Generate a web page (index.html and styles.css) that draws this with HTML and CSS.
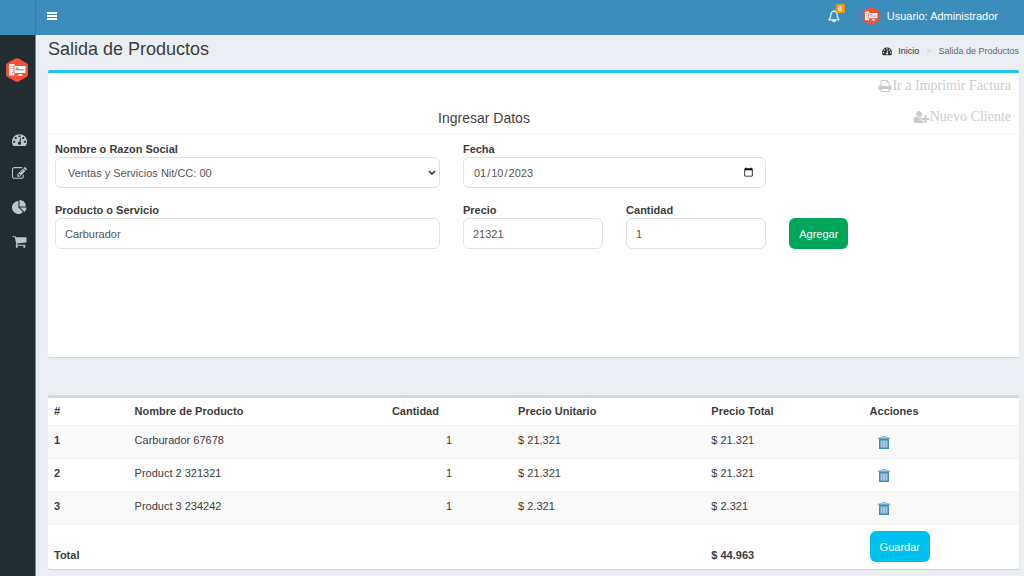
FILE: index.html
```html
<!DOCTYPE html>
<html lang="es">
<head>
<meta charset="utf-8">
<title>Salida de Productos</title>
<link rel="stylesheet" href="styles.css">
</head>
<body>
<svg class="sprite" aria-hidden="true">
  <symbol id="dashboard" viewBox="0 0 1792 1792"><path d="M384 1152q0-53-37.500-90.500t-90.500-37.500-90.500 37.500-37.500 90.500 37.500 90.500 90.500 37.500 90.500-37.500 37.500-90.500zm192-448q0-53-37.500-90.500t-90.500-37.500-90.500 37.500-37.500 90.500 37.500 90.500 90.500 37.500 90.500-37.500 37.500-90.500zm428 481l101-382q6-26-7.500-48.500t-38.500-29.500-48 6.500-30 39.500l-101 382q-60 5-107 43.500t-63 98.500q-20 77 20 146t117 89 146-20 89-117q16-60-6-117t-72-91zm660-33q0-53-37.500-90.500t-90.500-37.500-90.500 37.500-37.500 90.500 37.500 90.500 90.500 37.500 90.500-37.500 37.500-90.500zm-640-640q0-53-37.500-90.500t-90.500-37.500-90.500 37.500-37.500 90.500 37.500 90.500 90.500 37.500 90.500-37.500 37.500-90.500zm448 192q0-53-37.500-90.500t-90.500-37.500-90.500 37.500-37.500 90.500 37.500 90.500 90.500 37.500 90.500-37.500 37.500-90.500zm320 448q0 261-141 483-19 29-54 29h-1402q-35 0-54-29-141-221-141-483 0-182 71-348t191-286 286-191 348-71 348 71 286 191 191 286 71 348z"/></symbol>
  <symbol id="edit" viewBox="0 0 1792 1792"><path d="M888 1184l116-116-152-152-116 116v56h96v96h56zm440-720q-16-16-33 1l-350 350q-17 17-1 33t33-1l350-350q17-17 1-33zm80 594v190q0 119-84.500 203.500t-203.500 84.500h-832q-119 0-203.500-84.500t-84.500-203.500v-832q0-119 84.500-203.500t203.500-84.500h832q63 0 117 25 15 7 18 23 3 17-9 29l-49 49q-14 14-32 8-23-6-45-6h-832q-66 0-113 47t-47 113v832q0 66 47 113t113 47h832q66 0 113-47t47-113v-126q0-13 9-22l64-64q15-15 35-7t20 29zm-96-738l288 288-672 672h-288v-288zm444 132l-92 92-288-288 92-92q28-28 68-28t68 28l152 152q28 28 28 68t-28 68z"/></symbol>
  <symbol id="pie" viewBox="0 0 1792 1792"><path d="M768 890l546 546q-106 108-247.500 168t-298.500 60q-209 0-385.500-103t-279.500-279.500-103-385.500 103-385.500 279.500-279.500 385.500-103v762zm187 6h773q0 157-60 298.500t-168 247.500zm709-128h-768v-768q209 0 385.500 103t279.500 279.500 103 385.500z"/></symbol>
  <symbol id="cart" viewBox="0 0 1792 1792"><path d="M704 1536q0 52-38 90t-90 38-90-38-38-90 38-90 90-38 90 38 38 90zm896 0q0 52-38 90t-90 38-90-38-38-90 38-90 90-38 90 38 38 90zm128-1088v512q0 24-16.500 42.500t-40.500 21.500l-1044 122q13 60 13 70 0 16-24 64h920q26 0 45 19t19 45-19 45-45 19h-1024q-26 0-45-19t-19-45q0-11 8-31.500t16-36 21.500-40 15.500-29.500l-177-823h-204q-26 0-45-19t-19-45 19-45 45-19h256q16 0 28.500 6.500t19.500 15.500 13 24.500 8 26 5.500 29.500 4.500 26h1201q26 0 45 19t19 45z"/></symbol>
  <symbol id="print" viewBox="0 0 1792 1792"><path d="M448 1536h896v-256h-896v256zm0-640h896v-384h-160q-40 0-68-28t-28-68v-160h-640v640zm1152 64q0-26-19-45t-45-19-45 19-19 45 19 45 45 19 45-19 19-45zm128 0v416q0 13-9.500 22.500t-22.500 9.500h-224v160q0 40-28 68t-68 28h-960q-40 0-68-28t-28-68v-160h-224q-13 0-22.500-9.500t-9.500-22.500v-416q0-79 56.500-135.500t135.500-56.500h64v-544q0-40 28-68t68-28h672q40 0 88 20t76 48l152 152q28 28 48 76t20 88v256h64q79 0 135.500 56.500t56.500 135.500z"/></symbol>
  <symbol id="user-plus" viewBox="0 0 2048 1792"><path d="M704 896q-159 0-271.500-112.500t-112.500-271.500 112.500-271.500 271.500-112.500 271.500 112.500 112.500 271.500-112.500 271.500-271.500 112.500zm960 128h352q13 0 22.500 9.500t9.500 22.500v192q0 13-9.500 22.500t-22.500 9.500h-352v352q0 13-9.500 22.500t-22.500 9.500h-192q-13 0-22.500-9.500t-9.500-22.500v-352h-352q-13 0-22.500-9.500t-9.500-22.500v-192q0-13 9.500-22.500t22.500-9.500h352v-352q0-13 9.500-22.500t22.500-9.500h192q13 0 22.500 9.500t9.500 22.500v352zm-736 224q0 52 38 90t90 38h256v238q-68 50-171 50h-874q-121 0-194-69t-73-190q0-53 3.500-103.500t14-109 26.500-108.500 43-97.500 62-81 85.500-53.500 111.500-20q19 0 39 17 79 61 154.500 91.500t164.500 30.500 164.500-30.500 154.500-91.500q20-17 39-17 132 0 217 96h-223q-52 0-90 38t-38 90v192z"/></symbol>
  <symbol id="bell" viewBox="0 0 1792 1792"><path stroke="currentColor" stroke-width="50" d="M912 1696q0-16-16-16-59 0-101.500-42.500t-42.500-101.500q0-16-16-16t-16 16q0 73 51.500 124.500t124.500 51.500q16 0 16-16zm-666-288h1300q-266-300-266-832 0-51-24-105t-69-103-121.500-80.500-169.500-31.500-169.500 31.500-121.500 80.500-69 103-24 105q0 532-266 832zm1482 0q0 52-38 90t-90 38h-448q0 106-75 181t-181 75-181-75-75-181h-448q-52 0-90-38t-38-90q50-42 91-88t85-119.500 74.500-158.500 50-206 19.500-260q0-152 117-282.500t307-158.500q-8-19-8-39 0-40 28-68t68-28 68 28 28 68q0 20-8 39 190 28 307 158.500t117 282.500q0 139 19.500 260t50 206 74.500 158.500 85 119.500 91 88z"/></symbol>
  <symbol id="bars" viewBox="0 0 10 9"><path d="M0 0h10v2H0zM0 3h10v2H0zM0 6h10v2H0z"/></symbol>
  <symbol id="trash" viewBox="0 0 12 13"><path fill="#b3c3dc" d="M2 4h8v8H2z"/><path fill="none" stroke="#7fb0d6" d="M3.500 2V1.500L4.500.500h3l1 1V2"/><path opacity=".75" d="M0 1.500h12v1.500H0z"/><path d="M1 3h10v10H1zM2.500 4.500v7h7v-7z" fill-rule="evenodd"/><path opacity=".4" d="M4 4.500h1v6.500H4zM7 4.500h1v6.500H7z"/></symbol>
  <symbol id="brand" viewBox="0 0 22 24"><path fill="#fb4d34" d="M9.500.600a3 3 0 0 1 3 0l8 4.400a3 3 0 0 1 1.500 2.600v8.800a3 3 0 0 1-1.500 2.600l-8 4.400a3 3 0 0 1-3 0l-8-4.400A3 3 0 0 1 0 16.400V7.600A3 3 0 0 1 1.500 5z"/><path fill="#fff" d="M3 6h5.500v1.500H7.500V15H8.500v2.500H3zM8.500 8h11v7h-11zM13 16h2.500l1.500 2h-5.500z"/><path fill="#fb4d34" d="M4 8.500h2.500v.5H4zM4 10.500h2.500v.5H4zM6 14h1v1H6z"/><path fill="#6b3a35" d="M9.700 9.700h3v.7h-3zM9.700 11.500h8v.7h-8z"/></symbol>
</svg>

<header class="topbar">
  <div class="topbar-logo"></div>
  <nav class="topbar-nav">
    <button class="icon-button" type="button" aria-label="Menú"><svg class="icon-bars"><use href="#bars"/></svg></button>
    <div class="topbar-right">
      <button class="icon-button alerts" type="button" aria-label="Notificaciones"><svg class="icon-bell"><use href="#bell"/></svg><span class="badge">0</span></button>
      <a class="user" href="#"><svg class="user-logo"><use href="#brand"/></svg><span>Usuario: Administrador</span></a>
    </div>
  </nav>
</header>

<div class="wrapper">
  <aside class="sidebar">
    <svg class="brand"><use href="#brand"/></svg>
    <nav class="menu">
      <a href="#" aria-label="Inicio"><svg><use href="#dashboard"/></svg></a>
      <a href="#" aria-label="Registros"><svg><use href="#edit"/></svg></a>
      <a href="#" aria-label="Reportes"><svg><use href="#pie"/></svg></a>
      <a href="#" aria-label="Ventas"><svg><use href="#cart"/></svg></a>
    </nav>
  </aside>

  <main class="content">
    <div class="page-head">
      <h1>Salida de Productos</h1>
      <nav class="breadcrumb"><a href="#"><svg><use href="#dashboard"/></svg>Inicio</a><span class="sep">&gt;</span><span>Salida de Productos</span></nav>
    </div>

    <section class="box box-form">
      <div class="box-head">
        <a href="#"><svg class="icon-print"><use href="#print"/></svg>Ir a Imprimir Factura</a>
        <a href="#"><svg class="icon-user"><use href="#user-plus"/></svg>Nuevo Cliente</a>
        <h2>Ingresar Datos</h2>
      </div>
      <form class="form">
        <div class="field span-5">
          <label for="cliente">Nombre o Razon Social</label>
          <select id="cliente"><option>Ventas y Servicios Nit/CC: 00</option></select>
        </div>
        <div class="field span-4">
          <label for="fecha">Fecha</label>
          <input id="fecha" type="date" value="2023-01-10">
        </div>
        <div class="field span-5 row-start">
          <label for="producto">Producto o Servicio</label>
          <input id="producto" type="text" value="Carburador">
        </div>
        <div class="field span-2">
          <label for="precio">Precio</label>
          <input id="precio" type="text" value="21321">
        </div>
        <div class="field span-2">
          <label for="cantidad">Cantidad</label>
          <input id="cantidad" type="text" value="1">
        </div>
        <button class="btn btn-green" type="button">Agregar</button>
      </form>
    </section>

    <section class="box box-table">
      <table>
        <colgroup><col class="c-num"><col class="c-name"><col class="c-qty"><col class="c-unit"><col class="c-total"><col class="c-act"></colgroup>
        <thead>
          <tr><th>#</th><th>Nombre de Producto</th><th>Cantidad</th><th>Precio Unitario</th><th>Precio Total</th><th>Acciones</th></tr>
        </thead>
        <tbody>
          <tr><th>1</th><td>Carburador 67678</td><td class="qty">1</td><td>$ 21.321</td><td>$ 21.321</td><td><button class="icon-button delete" type="button" aria-label="Eliminar"><svg><use href="#trash"/></svg></button></td></tr>
          <tr><th>2</th><td>Product 2 321321</td><td class="qty">1</td><td>$ 21.321</td><td>$ 21.321</td><td><button class="icon-button delete" type="button" aria-label="Eliminar"><svg><use href="#trash"/></svg></button></td></tr>
          <tr><th>3</th><td>Product 3 234242</td><td class="qty">1</td><td>$ 2.321</td><td>$ 2.321</td><td><button class="icon-button delete" type="button" aria-label="Eliminar"><svg><use href="#trash"/></svg></button></td></tr>
        </tbody>
        <tfoot>
          <tr><th colspan="4">Total</th><th>$ 44.963</th><td><button class="btn btn-cyan" type="button">Guardar</button></td></tr>
        </tfoot>
      </table>
    </section>
  </main>
</div>
</body>
</html>
```
FILE: styles.css
```css
* { box-sizing: border-box; }
body {
  margin: 0;
  min-height: 100vh;
  display: flex;
  flex-direction: column;
  background: #ebeff4;
  color: #3c3c3c;
  font: 11px/16px "Liberation Sans", Arial, sans-serif;
}
a { color: inherit; text-decoration: none; }
svg { display: block; fill: currentColor; }
h1, h2 { margin: 0; font-weight: 400; }
.sprite { display: none; }
.icon-button { padding: 0; border: 0; background: none; color: inherit; cursor: pointer; }

.topbar { display: flex; height: 35px; background: #3c8dbc; color: #fff; }
.topbar-logo { width: 36px; border-right: 1px solid #367fa9; }
.topbar-nav { flex: 1; display: flex; align-items: center; justify-content: space-between; padding: 0 26px 3px 11px; }
.icon-bars { width: 10px; height: 9px; }
.topbar-right { display: flex; align-items: center; gap: 22px; }
.alerts { position: relative; }
.icon-bell { width: 12px; height: 12px; }
.badge {
  position: absolute;
  left: 8px;
  top: -6px;
  width: 9px;
  height: 9px;
  border-radius: 2px;
  background: #f39c12;
  font: 700 7px/9px "Liberation Sans", Arial, sans-serif;
  text-align: center;
}
.user { display: flex; align-items: center; gap: 7px; }
.user-logo { width: 18px; height: 18px; }

.wrapper { flex: 1; display: flex; }
.sidebar { width: 36px; padding-top: 23px; background: #222d32; border-right: 1px solid #7b8488; }
.brand { width: 22px; height: 24px; margin-left: 6px; }
.menu { padding-top: 40px; color: #b8c7ce; }
.menu a { display: flex; align-items: center; height: 34px; padding-left: 12px; }
.menu svg { width: 15px; height: 15px; }

.content { flex: 1; min-width: 0; padding: 0 5px 5px 12px; }
.page-head { display: flex; justify-content: space-between; align-items: flex-start; height: 35px; }
h1 { font-size: 18px; line-height: 28px; }
.breadcrumb { display: flex; gap: 7px; padding-top: 8px; font-size: 9px; color: #666; }
.breadcrumb a { display: flex; align-items: center; gap: 6px; color: #333; }
.breadcrumb svg { width: 10px; height: 10px; }
.breadcrumb .sep { color: #ccc; }

.box { border-top: 3px solid #d2d6de; border-radius: 2px; background: #fff; box-shadow: 0 1px 1px rgba(0, 0, 0, .12); }
.box-form { min-height: 287px; border-top-color: #1cc4ee; }
.box-head {
  display: flex;
  flex-direction: column;
  align-items: flex-end;
  padding: 5px 8px 7px 7px;
  border-bottom: 1px solid #f4f4f4;
}
.box-head a { display: flex; align-items: center; height: 16px; margin-bottom: 15px; color: #ccc; font: 14px/16px "Liberation Serif", "Times New Roman", serif; }
.box-head a + a { margin-bottom: 0; }
.icon-print { width: 14px; height: 14px; }
.icon-user { width: 17px; height: 14px; }
h2 { align-self: stretch; padding: 0 98px 0 0; margin-top: -15px; font-size: 14px; line-height: 16px; color: #444; text-align: center; pointer-events: none; }
.box-head h2 { margin-top: -15px; padding-top: 0; }

.form { display: grid; grid-template-columns: repeat(12, 1fr); column-gap: 23px; row-gap: 15px; padding: 8px 8px 0 7px; }
.span-5 { grid-column: span 5; }
.span-4 { grid-column: span 4; }
.span-2 { grid-column: span 2; }
.row-start { grid-column: 1 / span 5; }
.field { display: flex; flex-direction: column; min-width: 0; }
label { font-weight: 700; line-height: 15px; }
.field input, .field select {
  width: 100%;
  height: 31px;
  padding: 0 9px;
  border: 1px solid #dfe1e9;
  border-radius: 6px;
  background-color: #fff;
  color: #555;
  font: inherit;
}
.field select {
  appearance: none;
  padding: 0 20px 0 12px;
  background: #fff url("data:image/svg+xml,%3Csvg xmlns='http://www.w3.org/2000/svg' viewBox='0 0 8 6'%3E%3Cpath d='M1 1l3 3 3-3' fill='none' stroke='%23333' stroke-width='1.6'/%3E%3C/svg%3E") no-repeat right 3px center / 8px 6px;
}
.btn {
  height: 31px;
  padding: 0 10px;
  border: 0;
  border-radius: 6px;
  color: #fff;
  font: inherit;
  cursor: pointer;
}
.btn-green { grid-column: span 2; justify-self: start; align-self: end; background: #00a65a; }
.btn-cyan { background: #00c0ef; }

.box-table { margin-top: 38px; }
table { width: 100%; border-collapse: collapse; table-layout: fixed; }
.c-num { width: 8.3%; }
.c-name { width: 26.5%; }
.c-qty { width: 13%; }
.c-unit { width: 19.9%; }
.c-total { width: 16.3%; }
th, td { padding: 6px; text-align: left; vertical-align: top; }
thead th { padding: 5px 6px 6px; }
tbody tr { height: 33px; border-top: 1px solid #f4f4f4; }
tbody tr:nth-child(odd) { background: #f9f9f9; }
.qty { text-align: center; }
.delete { display: block; margin: 4px 0 0 8px; color: #3c8dbc; }
.delete svg { width: 12px; height: 13px; }
tfoot th { vertical-align: bottom; }
tfoot td { padding-bottom: 7px; }
tfoot tr { border-top: 1px solid #f4f4f4; }
```
